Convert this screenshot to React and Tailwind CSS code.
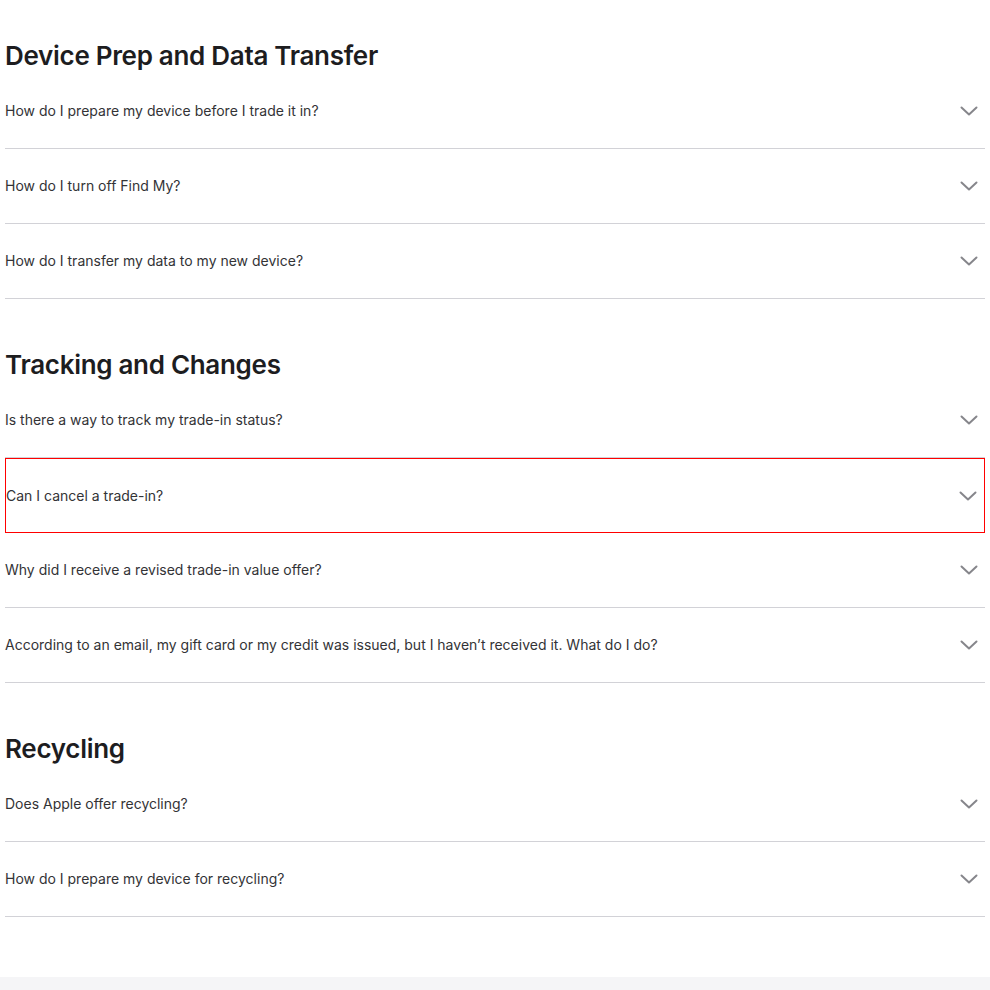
import React from "react";

const sections = [
  {
    title: "Device Prep and Data Transfer",
    items: [
      "How do I prepare my device before I trade it in?",
      "How do I turn off Find My?",
      "How do I transfer my data to my new device?",
    ],
  },
  {
    title: "Tracking and Changes",
    items: [
      "Is there a way to track my trade-in status?",
      "Can I cancel a trade-in?",
      "Why did I receive a revised trade-in value offer?",
      "According to an email, my gift card or my credit was issued, but I haven\u2019t received it. What do I do?",
    ],
  },
  {
    title: "Recycling",
    items: ["Does Apple offer recycling?", "How do I prepare my device for recycling?"],
  },
];

function Chevron() {
  return (
    <svg width="18" height="10" viewBox="0 0 18 10" fill="none" className="mr-[7px] shrink-0">
      <path d="M1.5 1.5 L9 8.5 L16.5 1.5" stroke="#86868b" strokeWidth="2" strokeLinecap="round" strokeLinejoin="round" />
    </svg>
  );
}

export default function App() {
  return (
    <div className="bg-white text-[#1d1d1f]" style={{ fontFamily: "Inter, 'Liberation Sans', sans-serif" }}>
      <div className="px-[5px] pt-[37px] pb-[60px]">
        {sections.map((s, si) => (
          <section key={s.title} className={si > 0 ? "mt-[47px]" : ""}>
            <h2 className="text-[26px] leading-[37px] font-semibold tracking-[-0.3px] text-[#1d1d1f]">{s.title}</h2>
            <div>
              {s.items.map((q) => {
                const hl = q === "Can I cancel a trade-in?";
                return (
                  <div
                    key={q}
                    className={
                      "box-border flex h-[75px] items-center justify-between " +
                      (hl ? "border border-[#ff0000]" : "border-b border-[#d2d2d7]")
                    }
                  >
                    <span className="text-[14px] leading-[20px] text-[#333336]">{q}</span>
                    <Chevron />
                  </div>
                );
              })}
            </div>
          </section>
        ))}
      </div>
      <div className="h-[20px] bg-[#f5f5f7]" />
    </div>
  );
}
